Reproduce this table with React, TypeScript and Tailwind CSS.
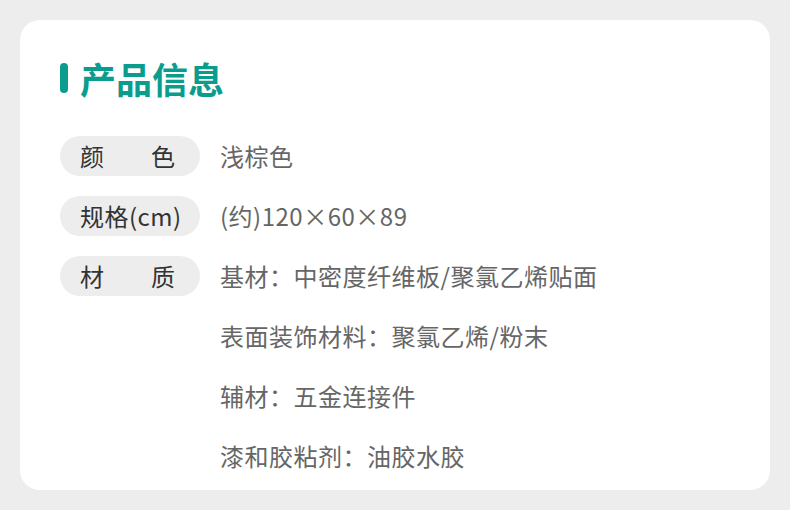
import React from 'react';

type Row = { label: string[]; values: string[] };

const rows: Row[] = [
    { label: ['颜', '色'], values: ['浅棕色'] },
    { label: ['规格(cm)'], values: ['(约)120×60×89'] },
    {
        label: ['材', '质'],
        values: [
            '基材：中密度纤维板/聚氯乙烯贴面',
            '表面装饰材料：聚氯乙烯/粉末',
            '辅材：五金连接件',
            '漆和胶粘剂：油胶水胶',
        ],
    },
];

export default function App() {
    return (
        <div className="w-[790px] h-[510px] bg-[#ededed] p-5 font-['Noto_Sans_CJK_SC','Noto_Sans',sans-serif]">
            <div className="h-[470px] bg-white rounded-[20px] pt-10 px-10">
                {/* title */}
                <div className="flex items-center h-9">
                    <div className="w-2 h-[30px] rounded-full bg-[#0a9d8e]" />
                    <h2 className="ml-[12px] text-[36px] leading-9 font-bold text-[#0a9d8e]">产品信息</h2>
                </div>

                <div className="mt-[30px]">
                    {rows.map((row, i) => (
                        <div key={i} className="flex">
                            <div className="w-[140px] h-[60px] flex items-center shrink-0">
                                <div
                                    className={
                                        row.label.length > 1
                                            ? 'w-full h-10 rounded-full bg-[#ededed] pl-5 pr-[25px] flex items-center justify-between whitespace-nowrap text-[24px] text-[#333]'
                                            : 'w-full h-10 rounded-full bg-[#ededed] px-5 flex items-center justify-between whitespace-nowrap text-[24px] tracking-[0.5px] text-[#333]'
                                    }
                                >
                                    {row.label.map((t) => (
                                        <span key={t}>{t}</span>
                                    ))}
                                </div>
                            </div>
                            <div className="ml-5 flex flex-col">
                                {row.values.map((v) => (
                                    <div key={v} className="h-[60px] flex items-center whitespace-nowrap text-[24px] tracking-[0.5px] text-[#666]">
                                        {v}
                                    </div>
                                ))}
                            </div>
                        </div>
                    ))}
                </div>
            </div>
        </div>
    );
}
